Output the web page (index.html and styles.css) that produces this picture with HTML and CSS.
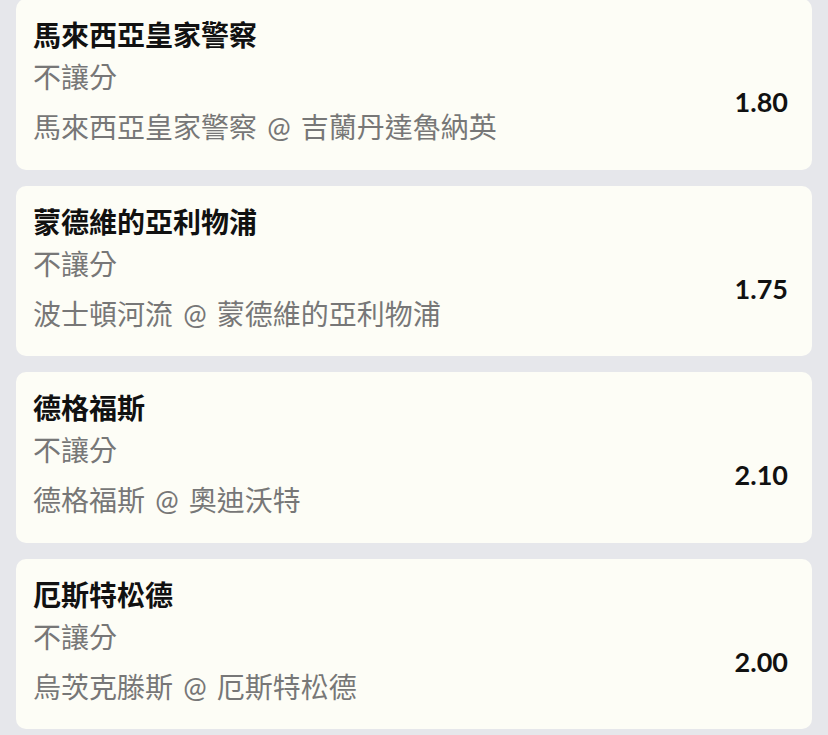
FILE: index.html
```html
<!DOCTYPE html>
<html lang="zh-Hant">
<head>
<meta charset="utf-8">
<title>投注選項</title>
<link rel="stylesheet" href="styles.css">
</head>
<body>
<div class="list">
  <div class="card">
    <div class="title">馬來西亞皇家警察</div>
    <div class="row">
      <div class="info">
        <div class="sub">不讓分</div>
        <div class="match">馬來西亞皇家警察 @ 吉蘭丹達魯納英</div>
      </div>
      <div class="odds">1.80</div>
    </div>
  </div>
  <div class="card">
    <div class="title">蒙德維的亞利物浦</div>
    <div class="row">
      <div class="info">
        <div class="sub">不讓分</div>
        <div class="match">波士頓河流 @ 蒙德維的亞利物浦</div>
      </div>
      <div class="odds">1.75</div>
    </div>
  </div>
  <div class="card">
    <div class="title">德格福斯</div>
    <div class="row">
      <div class="info">
        <div class="sub">不讓分</div>
        <div class="match">德格福斯 @ 奧迪沃特</div>
      </div>
      <div class="odds">2.10</div>
    </div>
  </div>
  <div class="card">
    <div class="title">厄斯特松德</div>
    <div class="row">
      <div class="info">
        <div class="sub">不讓分</div>
        <div class="match">烏茨克滕斯 @ 厄斯特松德</div>
      </div>
      <div class="odds">2.00</div>
    </div>
  </div>
</div>
</body>
</html>
```
FILE: styles.css
```css
html, body {
  margin: 0;
  padding: 0;
  background: #e6e7eb;
  height: 100%;
  overflow: hidden;
}
body {
  font-family: Lato, "Noto Sans CJK TC", sans-serif;
}
.list {
  display: flex;
  flex-direction: column;
  gap: 16px;
  padding: 0 16px;
  margin-top: -1px;
}
.card {
  background: #fdfdf6;
  border-radius: 10px;
  height: 170.5px;
  box-sizing: border-box;
  padding: 17px 24px 0 17px;
}
.title {
  font-size: 28px;
  font-weight: 700;
  line-height: 38px;
  color: #111;
}
.row {
  display: flex;
  align-items: center;
  justify-content: space-between;
  margin-top: 3px;
}
.info {
  display: flex;
  flex-direction: column;
  gap: 10px;
}
.sub, .match {
  font-size: 28px;
  line-height: 40px;
  color: #777;
}
.match {
  word-spacing: 3px;
}
.odds {
  font-size: 27px;
  font-weight: 700;
  color: #111;
  line-height: 40px;
}
```
